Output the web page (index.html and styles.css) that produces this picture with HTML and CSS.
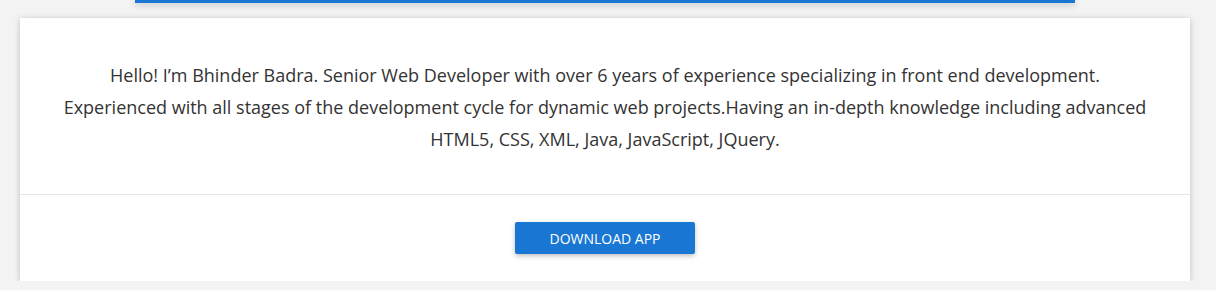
FILE: index.html
```html
<!DOCTYPE html>
<html>
<head>
<meta charset="utf-8">
<link rel="stylesheet" href="styles.css">
</head>
<body>
<div class="page">
  <div class="top-bar"></div>
  <div class="card">
    <div class="card-body">
      <p class="intro">Hello! I’m Bhinder Badra. Senior Web Developer with over 6 years of experience specializing in front end development.<br>Experienced with all stages of the development cycle for dynamic web projects.Having an in-depth knowledge including advanced HTML5, CSS, XML, Java, JavaScript, JQuery.</p>
    </div>
    <div class="card-footer">
      <button class="btn">DOWNLOAD APP</button>
    </div>
  </div>
</div>
</body>
</html>
```
FILE: styles.css
```css
html, body {
  margin: 0;
  padding: 0;
  background: #f3f3f3;
}
.page {
  width: 1170px;
  padding: 0 26px 0 20px;
  font-family: "Open Sans", "Noto Sans", sans-serif;
}
.top-bar {
  height: 3px;
  margin: 0 115px 0 115px;
  background: #1976d2;
  box-shadow: 0 2px 6px rgba(0,0,0,0.25);
}
.card {
  margin-top: 15px;
  background: #fff;
  box-shadow: 0 1px 6px rgba(0,0,0,0.22);
}
.card-body {
  padding: 41px 30px 39px;
  border-bottom: 1px solid #e6e6e6;
}
.intro {
  margin: 0;
  text-align: center;
  font-size: 18px;
  line-height: 32px;
  color: #333;
}
.card-footer {
  display: flex;
  justify-content: center;
  padding: 27px 0 27px;
}
.btn {
  width: 180px;
  height: 32px;
  border: none;
  border-radius: 2px;
  background: #1976d2;
  color: #fff;
  font-family: "Open Sans", "Noto Sans", sans-serif;
  font-size: 14px;
  box-shadow: 0 2px 5px rgba(0,0,0,0.25);
  padding: 0;
}
```
